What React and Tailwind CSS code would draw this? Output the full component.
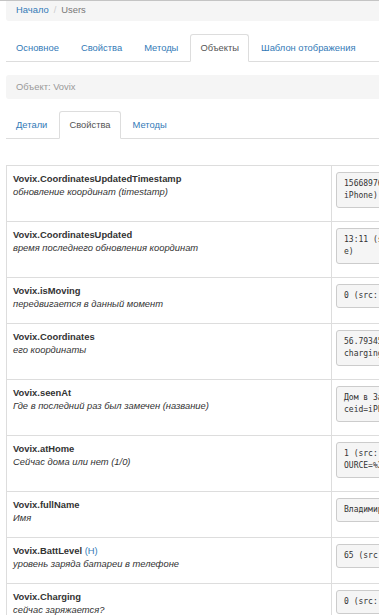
const rows = [
  {
    name: "Vovix.CoordinatesUpdatedTimestamp",
    desc: "обновление координат (timestamp)",
    value: ["1566897600 (src: Vovix.", "iPhone)"],
  },
  {
    name: "Vovix.CoordinatesUpdated",
    desc: "время последнего обновления координат",
    value: ["13:11 (src: ThisComput", "e)"],
  },
  {
    name: "Vovix.isMoving",
    desc: "передвигается в данный момент",
    value: ["0 (src: gpsdevice)"],
  },
  {
    name: "Vovix.Coordinates",
    desc: "его координаты",
    value: ["56.793456,60.612345 (src:", "charging)"],
  },
  {
    name: "Vovix.seenAt",
    desc: "Где в последний раз был замечен (название)",
    value: ["Дом в Заречном (src: devi", "ceid=iPhone)"],
  },
  {
    name: "Vovix.atHome",
    desc: "Сейчас дома или нет (1/0)",
    value: ["1 (src: gps&S", "OURCE=%20)"],
  },
  {
    name: "Vovix.fullName",
    desc: "Имя",
    value: ["Владимир"],
  },
  {
    name: "Vovix.BattLevel",
    hist: true,
    desc: "уровень заряда батареи в телефоне",
    value: ["65 (src: gps)"],
  },
  {
    name: "Vovix.Charging",
    desc: "сейчас заряжается?",
    value: ["0 (src: gps)"],
  },
];

const mainTabs = ["Основное", "Свойства", "Методы", "Объекты", "Шаблон отображения"];
const subTabs = ["Детали", "Свойства", "Методы"];

function Tabs({ items, active }) {
  return (
    <div className="flex border-b border-[#ddd] h-[28px]">
      {items.map((t) => (
        <div
          key={t}
          className={
            t === active
              ? "px-[9px] mr-[2px] h-[28px] leading-[26px] border border-[#ddd] border-b-white bg-white rounded-t-[3px] text-[#555]"
              : "px-[9px] mr-[2px] h-[27px] leading-[26px] border border-transparent text-[#337ab7]"
          }
        >
          {t}
        </div>
      ))}
    </div>
  );
}

export default function App() {
  return (
    <div
      className="w-[379px] h-[615px] overflow-hidden bg-white border-t border-[#c4c4c4] text-[9.4px] text-[#333]"
      style={{ fontFamily: '"Liberation Sans", Arial, sans-serif' }}
    >
      <div className="w-[640px] pl-[6px]">
        <div className="h-[20px] bg-[#f5f5f5] rounded-b-[3px] pl-[10px] leading-[17px]">
          <span className="text-[#337ab7]">Начало</span>
          <span className="text-[#ccc] px-[5px]">/</span>
          <span className="text-[#777]">Users</span>
        </div>

        <div className="mt-[13px]">
          <Tabs items={mainTabs} active="Объекты" />
        </div>

        <div className="mt-[13px] h-[24px] bg-[#f5f5f5] rounded-[3px] pl-[10px] leading-[23px] text-[#999]">
          Объект: Vovix
        </div>

        <div className="mt-[12px]">
          <Tabs items={subTabs} active="Свойства" />
        </div>

        <table className="mt-[26px] border-collapse">
          <tbody>
            {rows.map((r) => (
              <tr key={r.name}>
                <td className="w-[325px] border border-[#ddd] align-top pt-[6px] pb-[13px] px-[6px] leading-[13px]">
                  <div className="font-bold">
                    {r.name}
                    {r.hist && <span className="font-normal text-[#337ab7]"> (H)</span>}
                  </div>
                  <div className="italic">{r.desc}</div>
                </td>
                <td className="w-[300px] border border-[#ddd] align-top pt-[6px] pb-[13px] px-[4px]">
                  <div
                    className="bg-[#f5f5f5] border border-[#ccc] rounded-[3px] pl-[7px] py-[5px] leading-[12px] text-[8px] text-[#333] whitespace-pre"
                    style={{ fontFamily: '"DejaVu Sans Mono", monospace' }}
                  >
                    {r.value.map((v, i) => (
                      <div key={i}>{v}</div>
                    ))}
                  </div>
                </td>
              </tr>
            ))}
          </tbody>
        </table>
      </div>
    </div>
  );
}
